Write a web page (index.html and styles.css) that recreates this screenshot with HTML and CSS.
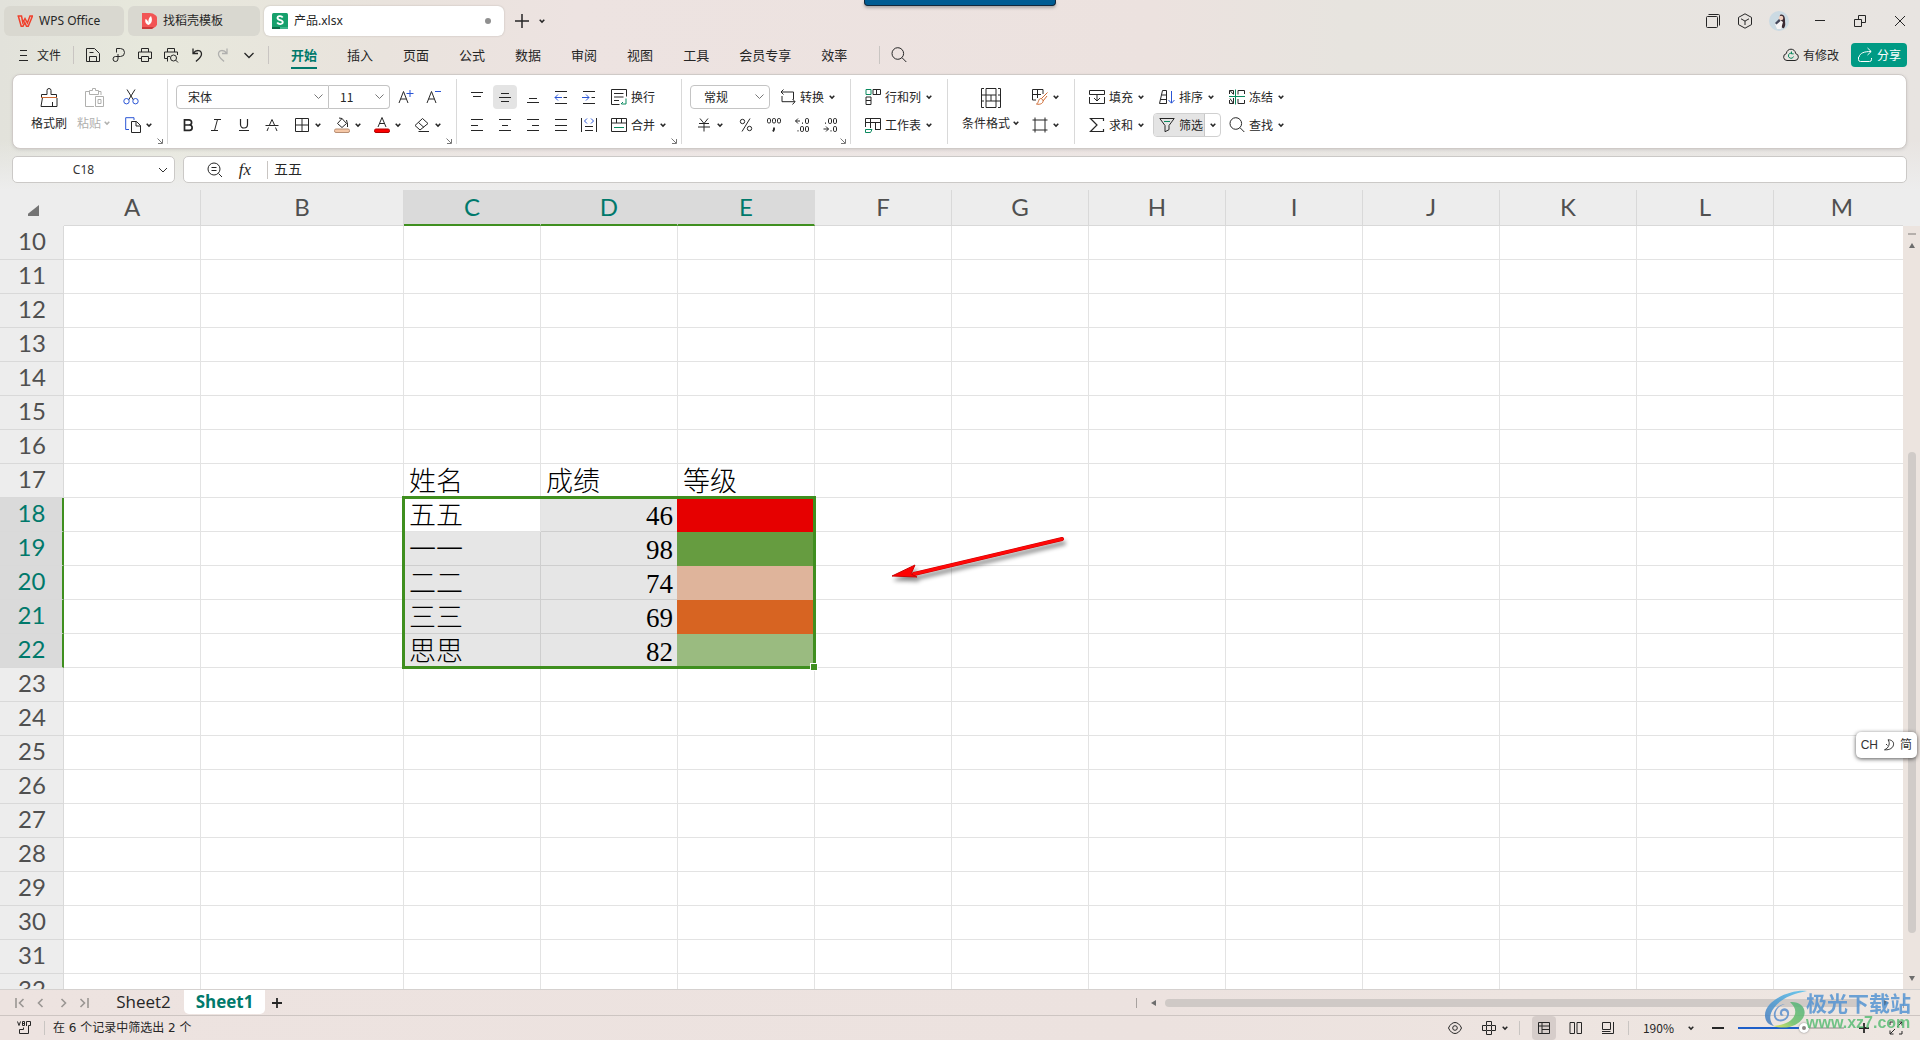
FILE: index.html
```html
<!DOCTYPE html>
<html lang="zh-CN">
<head>
<meta charset="utf-8">
<meta name="viewport" content="width=device-width, initial-scale=1">
<title>产品.xlsx - WPS Office</title>
<link rel="stylesheet" href="styles.css">
</head>
<body>
<svg class="defs" aria-hidden="true">
  <symbol id="chev" viewBox="0 0 8 8"><path d="M1.7 2.8 4 5.1l2.3-2.3" stroke-width="1.5"/></symbol>
  <symbol id="drop" viewBox="0 0 10 10"><path d="m1 3 4 4 4-4"/></symbol>
  <symbol id="corner" viewBox="0 0 6 6"><path d="M.5.5 5 5M5.5 1v4.5H1"/></symbol>
  <symbol id="search" viewBox="0 0 16 16"><circle cx="6.800" cy="6.500" r="5.800"/><path d="m11 10.700 4.300 4.300"/></symbol>
</svg>

<header class="chrome">
  <div class="titlebar">
    <button class="tab"><svg width="16" height="12" viewBox="0 0 16 12"><path d="M.5 1h4l1.300 6.500L8 3.500 10.400 8 13 1h2.500L11.200 11.300H9.500L7.800 7.500 6 11.300H4.200L1.300 1" fill="none" stroke="#f0402c" stroke-width="1.500"/></svg>WPS Office</button>
    <button class="tab tab-docer"><svg width="16" height="16" viewBox="0 0 16 16"><path d="M1 0h7.500a8 7.500 0 0 1 0 16H1z" fill="#f25555"/><path d="M1 14h12l-2 2H1z" fill="#c93a3a"/><path d="M7.500 12C4 10.500 4 8 4.500 6 6 6.500 7 8 7.500 10 7 7 8 4.500 10 3c1.500 3.500 1.500 7-2.500 9z" fill="#fff"/></svg>找稻壳模板</button>
    <button class="tab tab-active"><svg width="16" height="16" viewBox="0 0 16 16"><rect width="16" height="16" rx="1.500" fill="#16a06c"/><path d="M0 14h16v2H0z" fill="#0b6d48"/><path d="M8 14h8v2H8z" fill="#3cb58a"/><path d="M10.700 4.500C9.500 2.600 5.500 2.800 5.500 5.100c0 2.700 5.300 1.300 5.300 4 0 2.400-4.300 2.600-5.600.4" fill="none" stroke="#fff" stroke-width="1.800"/></svg><span class="tab-name">产品.xlsx</span><i class="dot"></i></button>
    <button class="new-tab" aria-label="新建"><svg width="14" height="14" viewBox="0 0 14 14"><path d="M7 0v14M0 7h14" stroke-width="1.500"/></svg></button>
    <button class="new-tab" aria-label="标签列表"><svg width="8" height="8"><use href="#chev"/></svg></button>
    <div class="window-tools">
      <button class="tool" aria-label="窗口"><svg width="16" height="16" viewBox="0 0 16 16"><rect x="1.500" y="3.500" width="11" height="11" rx="1"/><path d="M3.500 1.500h10q1 0 1 1v10"/></svg></button>
      <button class="tool" aria-label="应用"><svg width="16" height="16" viewBox="0 0 16 16"><path d="m8 .8 6.500 3.600v7.200L8 15.200l-6.500-3.600V4.400zM4 5.800l4 2.300 4-2.300M8 8v4"/></svg></button>
      <button class="tool avatar" aria-label="账号"><svg width="20" height="20" viewBox="0 0 20 20"><circle cx="10" cy="10" r="10" fill="#cbdae3"/><path d="M11 4c3-1.500 5 1 5 5s1 5-1 8c-2 1-3-2-3-5l-2-2z" fill="#3a2a33"/><circle cx="12" cy="7" r="2.300" fill="#f0cfc0"/><path d="m6 13 5-4 3 2-2 7H8z" fill="#f5f3f4"/><path d="m6 12 4-4 1.500 2-4 3.500z" fill="#44465a"/></svg></button>
      <button class="win" aria-label="最小化"><svg width="12" height="12" viewBox="0 0 12 12"><path d="M1 5.500h10"/></svg></button>
      <button class="win" aria-label="还原"><svg width="12" height="12" viewBox="0 0 12 12"><path d="M.5 4.500h7v7h-7zM4.500 4.500v-4h7v7h-4"/></svg></button>
      <button class="win" aria-label="关闭"><svg width="12" height="12" viewBox="0 0 12 12"><path d="m1 1 10 10M11 1 1 11"/></svg></button>
    </div>
    <div class="top-banner"></div>
  </div>

  <nav class="menubar">
    <button class="file"><svg width="10" height="12" viewBox="0 0 10 12"><path d="M1 1.500h7M1 6.500h7M0 11.500h9"/></svg>文件</button>
    <i class="bar"></i>
    <div class="quick">
      <button aria-label="保存"><svg width="16" height="16" viewBox="0 0 16 16"><path d="M1.500 1.500h8l5 5v8h-13zM4.500 14.500v-5h7v5M4.500 5.500h4"/></svg></button>
      <button aria-label="输出"><svg width="16" height="16" viewBox="0 0 16 16"><path d="M5.500 5.500v-4h4a4 4 0 0 1 0 8h-5a2.500 2.500 0 1 0 2.500 2.500V7"/></svg></button>
      <button aria-label="打印"><svg width="16" height="16" viewBox="0 0 16 16"><path d="M4.500 5V1.500h7V5M4 11.500H1.500V5h13v6.500H12M4.500 9.500h7v5h-7z"/></svg></button>
      <button aria-label="打印预览"><svg width="16" height="16" viewBox="0 0 16 16"><path d="M4.500 5V1.500h7V5M4 11.500H1.500V5h13v3M4.500 14.500V9.500H7"/><circle cx="10.500" cy="11" r="3"/><path d="m12.800 13.200 2.200 2.300"/></svg></button>
      <button aria-label="撤销"><svg width="16" height="16" viewBox="0 0 16 16"><path d="M4 1.500v5h5M4.300 6.200C7 2.500 12.500 2.500 12.500 7c0 3-3 5-5.500 7.500" stroke-width="1.300"/></svg></button>
      <button class="off" aria-label="恢复"><svg width="16" height="16" viewBox="0 0 16 16"><path d="M12 1.500v5H7M11.700 6.200C9 2.500 3.500 2.500 3.500 7c0 3 3 5 5.500 7.500" stroke-width="1.300"/></svg></button>
      <button aria-label="更多"><svg width="16" height="16" viewBox="0 0 16 16"><path d="m3.500 6 4.500 4.500L12.500 6" stroke-width="1.300"/></svg></button>
    </div>
    <i class="bar"></i>
    <div class="menus">
      <a href="#" class="current">开始</a><a href="#">插入</a><a href="#">页面</a><a href="#">公式</a><a href="#">数据</a><a href="#">审阅</a><a href="#">视图</a><a href="#">工具</a><a href="#">会员专享</a><a href="#">效率</a>
    </div>
    <i class="bar"></i>
    <button class="find" aria-label="搜索"><svg width="16" height="16"><use href="#search"/></svg></button>
    <div class="cloud">
      <button class="state"><svg width="16" height="16" viewBox="0 0 16 16"><path d="M4 13.500a3.500 3.500 0 0 1-.7-6.900C4 .7 12 .7 12.700 6.600a3.500 3.500 0 0 1-.7 6.900z"/><path d="M10.500 9.500A2.600 2.600 0 1 1 9 6.300M8.500 4.500v2.300h2.200" class="g"/></svg>有修改</button>
      <button class="share"><svg width="16" height="16" viewBox="0 0 16 16"><path d="M1.500 10v2.500q0 2 2 2h9q2 0 2-2V11M2 10c1-4 5-5.500 12-5.500M10.500 1l3.700 3.500L10.500 8"/></svg>分享</button>
    </div>
  </nav>

  <section class="ribbon">
    <div class="group first">
      <button class="big"><svg width="20" height="20" viewBox="0 0 20 20"><path d="M2.500 9V6.500h5.500v-4a2 2 0 0 1 4 0v4h5.500V9M3.500 9.500 2 18.500h16V10M13.500 18.500V14"/><path d="M2 9.500h16" class="o"/></svg><span>格式刷</span></button>
      <button class="big off"><svg width="20" height="20" viewBox="0 0 20 20"><path d="M5 3.500H1.500v15H10M14 3.500h3V7M5.500 2.500h3V.5h3v2h3v4h-9zM11.500 8.500h8v10h-8zM14 11.500h3v4h-3z"/></svg><span>粘贴<svg width="8" height="8"><use href="#chev"/></svg></span></button>
      <div class="rows">
        <div class="row"><button class="ib" aria-label="剪切"><svg width="16" height="16" viewBox="0 0 16 16"><path d="M4 .5 10.500 11M12 .5 5.500 11"/><circle cx="3.500" cy="12.200" r="2.700" class="b"/><circle cx="12.500" cy="12.200" r="2.700" class="b"/></svg></button></div>
        <div class="row"><button class="dd" aria-label="复制"><i><svg width="16" height="16" viewBox="0 0 16 16"><path d="M4 12.500H.7V.7H9V3" class="b"/><path d="M6.500 4.500h5l4 4v7h-9zM11 4.500v4.500h4.500"/></svg></i><svg width="8" height="8"><use href="#chev"/></svg></button></div>
      </div>
      <svg class="launcher" width="6" height="6"><use href="#corner"/></svg>
    </div>

    <div class="group snug">
      <div class="rows">
        <div class="row">
          <div class="pair"><select class="font" aria-label="字体"><option>宋体</option></select><select class="size" aria-label="字号"><option>11</option></select></div>
          <button class="ib" aria-label="增大字号"><svg width="16" height="16" viewBox="0 0 16 16"><path d="m1 14 4.500-11.500L10 14M2.700 10h5.600"/><path d="M12 1v7M8.500 4.500h7" class="b"/></svg></button>
          <button class="ib" aria-label="减小字号"><svg width="16" height="16" viewBox="0 0 16 16"><path d="m1 14 4.500-11.500L10 14M2.700 10h5.600"/><path d="M9 2.500h6" class="b"/></svg></button>
        </div>
        <div class="row">
          <button class="ib" aria-label="加粗"><svg width="16" height="16" viewBox="0 0 16 16"><path d="M4.500 8H9a2.500 2.500 0 0 0 0-5.200H4.500v10.500h5A2.600 2.600 0 0 0 9.500 8" stroke-width="1.700"/></svg></button>
          <button class="ib" aria-label="倾斜"><svg width="16" height="16" viewBox="0 0 16 16"><path d="M6 2.500h7M3 13.500h7M9.500 2.500l-3 11"/></svg></button>
          <button class="ib" aria-label="下划线"><svg width="16" height="16" viewBox="0 0 16 16"><path d="M4.500 2v5.500a3.500 3.500 0 0 0 7 0V2M3 13.500h10" stroke-width="1.200"/></svg></button>
          <button class="ib" aria-label="删除线"><svg width="16" height="16" viewBox="0 0 16 16"><path d="M5.500 8 8 2.500 10.500 8M1.500 8.500h13M4.500 10.500 3 14M11.500 10.500 13 14"/></svg></button>
          <button class="dd" aria-label="边框"><i><svg width="16" height="16" viewBox="0 0 16 16"><path d="M1.500 1.500h13v13h-13zM8 1.500v13M1.500 8h13"/></svg></i><svg width="8" height="8"><use href="#chev"/></svg></button>
          <button class="dd" aria-label="填充颜色"><i><svg width="16" height="16" viewBox="0 0 16 16"><path d="m8 1.500-4.500 5L8 10.500l4.500-4zM5 1l3 .5M12.500 3l1 4v3"/><rect x=".5" y="12" width="15" height="3.500" rx="1.500" fill="#f5c7a6" stroke="#b88f74"/></svg></i><svg width="8" height="8"><use href="#chev"/></svg></button>
          <button class="dd" aria-label="字体颜色"><i><svg width="16" height="16" viewBox="0 0 16 16"><path d="M4 10 8 .5l4 9.500M5.500 6.500h5"/><rect x=".5" y="12" width="15" height="3.500" rx="1.500" fill="#fb0000" stroke="#b00000"/></svg></i><svg width="8" height="8"><use href="#chev"/></svg></button>
          <button class="dd" aria-label="清除"><i><svg width="16" height="16" viewBox="0 0 16 16"><path d="m6 13-5-4.500L8.500 1.500l5.500 5zM4.500 5.500l5.500 5M4.500 14.500H15"/></svg></i><svg width="8" height="8"><use href="#chev"/></svg></button>
        </div>
      </div>
      <svg class="launcher" width="6" height="6"><use href="#corner"/></svg>
    </div>

    <div class="group">
      <div class="rows">
        <div class="row">
          <button class="ib" aria-label="顶端对齐"><svg width="16" height="16" viewBox="0 0 16 16"><path d="M2 3.500h12M4 7.500h8"/></svg></button>
          <button class="ib on" aria-label="垂直居中"><svg width="16" height="16" viewBox="0 0 16 16"><path d="M4 4.500h8M2 8.500h12M4 12.500h8"/></svg></button>
          <button class="ib" aria-label="底端对齐"><svg width="16" height="16" viewBox="0 0 16 16"><path d="M4 9.500h8M2 13.500h12"/></svg></button>
          <button class="ib" aria-label="减少缩进"><svg width="16" height="16" viewBox="0 0 16 16"><path d="M2 2.500h12M10.500 8.500H14M2 14.500h12"/><path d="M9 8.500H2M5 5.500l-3 3 3 3" class="b"/></svg></button>
          <button class="ib" aria-label="增加缩进"><svg width="16" height="16" viewBox="0 0 16 16"><path d="M2 2.500h12M10.500 8.500H14M2 14.500h12"/><path d="M1 8.500h7M5 5.500l3 3-3 3" class="b"/></svg></button>
        </div>
        <div class="row">
          <button class="ib" aria-label="左对齐"><svg width="16" height="16" viewBox="0 0 16 16"><path d="M2 2.500h12M2 8.500h7M2 13.500h12"/></svg></button>
          <button class="ib" aria-label="水平居中"><svg width="16" height="16" viewBox="0 0 16 16"><path d="M2 2.500h12M5 8.500h6M2 13.500h12"/></svg></button>
          <button class="ib" aria-label="右对齐"><svg width="16" height="16" viewBox="0 0 16 16"><path d="M2 2.500h12M7 8.500h7M2 13.500h12"/></svg></button>
          <button class="ib" aria-label="两端对齐"><svg width="16" height="16" viewBox="0 0 16 16"><path d="M2 2.500h12M2 8.500h12M2 13.500h12"/></svg></button>
          <button class="ib" aria-label="分散对齐"><svg width="16" height="16" viewBox="0 0 16 16"><path d="M.5 1v14M15.500 1v14M4 9.500h8M4 13.500h8"/><path d="M6 1.500 3.500 4 6 6.500M10 1.500 12.500 4 10 6.500" class="b"/></svg></button>
        </div>
      </div>
      <div class="rows">
        <button class="tb"><svg width="16" height="16" viewBox="0 0 16 16"><path d="M8.500 15.500h-8V.5h15v7M3 4.500h9.500M3 8h9.500M3 11.500h5"/><path d="M15 9.500v5.500h-4.500M12 13l-2 2" class="g"/></svg>换行</button>
        <button class="tb"><svg width="16" height="16" viewBox="0 0 16 16"><path d="M.5 1.500h15v13H.5zM.5 6h15M5.500 1.500V6M10.500 1.500V6"/><path d="M3 10.500h10" class="g"/></svg>合并<svg width="8" height="8"><use href="#chev"/></svg></button>
      </div>
      <svg class="launcher" width="6" height="6"><use href="#corner"/></svg>
    </div>

    <div class="group tight">
      <div class="rows">
        <div class="row wide">
          <select class="format" aria-label="数字格式"><option>常规</option></select>
          <button class="tb"><svg width="16" height="16" viewBox="0 0 16 16"><path d="M3.500.5 1 3l2.500 2.500M1 3h12.500v7.500M12.500 10 15 12.700l-2.500 2.800M15 12.700H2V7"/></svg>转换<svg width="8" height="8"><use href="#chev"/></svg></button>
        </div>
        <div class="row wide">
          <button class="dd" aria-label="货币"><i><svg width="16" height="16" viewBox="0 0 16 16"><path d="m4 1.500 4 5 4-5M3 6.500h10M2 10h12M8 6.500v8"/></svg></i><svg width="8" height="8"><use href="#chev"/></svg></button>
          <div class="row">
            <button class="ib" aria-label="百分比"><svg width="16" height="16" viewBox="0 0 16 16"><path d="m12 1.500-8 13"/><circle cx="4.500" cy="4.500" r="2.200"/><circle cx="11.500" cy="11.500" r="2.200"/></svg></button>
            <button class="ib" aria-label="千位分隔"><svg width="16" height="16" viewBox="0 0 16 16"><rect x="1.500" y="1.500" width="3" height="4.500" rx="1.300"/><rect x="6.500" y="1.500" width="3" height="4.500" rx="1.300"/><rect x="11.500" y="1.500" width="3" height="4.500" rx="1.300"/><path d="M8 10.500v2l-1 2" stroke-width="1.800"/></svg></button>
            <button class="ib" aria-label="增加小数位"><svg width="16" height="16" viewBox="0 0 16 16"><path d="M4 1.500 1.500 4 4 6.500M1.500 4H6M8.500 5.500v1.300M4 13.200v1.300"/><rect x="11.500" y="1.500" width="3" height="5" rx="1.300"/><rect x="6.500" y="9.500" width="3" height="5" rx="1.300"/><rect x="11.500" y="9.500" width="3" height="5" rx="1.300"/></svg></button>
            <button class="ib" aria-label="减少小数位"><svg width="16" height="16" viewBox="0 0 16 16"><path d="M4 9.500 6.500 12 4 14.500M6.500 12H1.500M3.500 5.500v1.300M9 13.200v1.300"/><rect x="6.500" y="1.500" width="3" height="5" rx="1.300"/><rect x="11.500" y="1.500" width="3" height="5" rx="1.300"/><rect x="11.500" y="9.500" width="3" height="5" rx="1.300"/></svg></button>
          </div>
        </div>
      </div>
      <svg class="launcher" width="6" height="6"><use href="#corner"/></svg>
    </div>

    <div class="group roomy">
      <div class="rows">
        <button class="tb"><svg width="16" height="16" viewBox="0 0 16 16"><path d="M1 .5h5v5H1z" class="g"/><path d="M8 5.500v-5h7.500v5H8M11.500.5v5M1 8h5v7.500H1zM1 11.500h5"/></svg>行和列<svg width="8" height="8"><use href="#chev"/></svg></button>
        <button class="tb"><svg width="16" height="16" viewBox="0 0 16 16"><path d="M10 12.500h5.500v-11H.5V10M.5 5.500h15M5.500 1.500V11M10.500 5.500v7"/><path d="M.5 12.500H7l-1.500 3H.5z" class="g"/></svg>工作表<svg width="8" height="8"><use href="#chev"/></svg></button>
      </div>
    </div>

    <div class="group roomy near">
      <button class="big"><svg width="20" height="20" viewBox="0 0 20 20"><path d="M3 .5H.5v19H3M17 .5h2.500v19H17M5 .5h10v19H5zM.5 7H15M5 13h14.500M10 7v6M.5 13H3M17 7h2.500"/></svg><span>条件格式<svg width="8" height="8"><use href="#chev"/></svg></span></button>
      <div class="rows">
        <button class="dd" aria-label="表格样式"><i><svg width="16" height="16" viewBox="0 0 16 16"><path d="M4 11H.5V.5h10.500V5M.5 5.500H9M5.500.5V9"/><path d="m15.500 3.500-6 6M15 7l-4 5M9.500 9.500C6 9 7 14 4.500 15c4 1 7-1 6.500-3.500z" class="o"/></svg></i><svg width="8" height="8"><use href="#chev"/></svg></button>
        <button class="dd" aria-label="单元格"><i><svg width="16" height="16" viewBox="0 0 16 16"><path d="M3 .5v15M13 .5v15M.5 3h15M.5 13h15"/></svg></i><svg width="8" height="8"><use href="#chev"/></svg></button>
      </div>
    </div>

    <div class="group roomy last">
      <div class="rows">
        <button class="tb"><svg width="16" height="16" viewBox="0 0 16 16"><path d="M3 5.500H.5v-4h15v4H13M.5 8v6.500h15V8M3 5.500h10M8 5.500v6M5 9l3 3 3-3"/></svg>填充<svg width="8" height="8"><use href="#chev"/></svg></button>
        <button class="tb"><svg width="16" height="16" viewBox="0 0 16 16"><path d="M14.500 4V1.500H1.500l6.500 6.500-6.500 6.500h13V12" stroke-width="1.200"/></svg>求和<svg width="8" height="8"><use href="#chev"/></svg></button>
      </div>
      <div class="rows">
        <button class="tb pad"><svg width="16" height="16" viewBox="0 0 16 16"><path d="m.5 14.500 3-13h4v13M2 10.500h5.500M3 6h4.500M.5 14.500h7"/><path d="M12.500 2v12M9.500 11l3 3.200 3-3.200" class="b"/></svg>排序<svg width="8" height="8"><use href="#chev"/></svg></button>
        <div class="split"><button><svg width="16" height="16" viewBox="0 0 16 16"><path d="M.8 1.500h14.400L10 8.500v4.200l-4 2V8.500z"/><path d="M5 4.500h6" class="g"/></svg>筛选</button><button aria-label="筛选选项"><svg width="8" height="8"><use href="#chev"/></svg></button></div>
      </div>
      <div class="rows">
        <button class="tb"><svg width="16" height="16" viewBox="0 0 16 16"><path d="M4.500 5V1.500H.5V5M1 1.500l3.500 4M9 5.500V1.500h6.500V5M.5 11v3.500h4V9M1 9.500l3.500 5M9 10v4.500h6.500V11"/><path d="M0 7.500h16M6.500.5v15" class="g"/></svg>冻结<svg width="8" height="8"><use href="#chev"/></svg></button>
        <button class="tb"><svg width="16" height="16"><use href="#search"/></svg>查找<svg width="8" height="8"><use href="#chev"/></svg></button>
      </div>
    </div>
  </section>

  <section class="formula">
    <div class="namebox"><input type="text" value="C18" aria-label="名称框"><svg width="10" height="10"><use href="#drop"/></svg></div>
    <div class="fx">
      <button aria-label="缩放"><svg width="16" height="16" viewBox="0 0 16 16"><circle cx="7" cy="7" r="6"/><path d="m11.500 11.500 3.500 3.500M4.500 5.500h5M4.500 8.500h5"/></svg></button>
      <button class="fn" aria-label="插入函数">fx</button>
      <i class="bar"></i>
      <input type="text" value="五五" aria-label="编辑栏">
    </div>
  </section>
</header>

<main class="sheet">
  <div class="cells"><table id="grid"></table>
    <svg class="arrow" width="190" height="56" viewBox="0 0 190 56"><path d="M176 6 28 41" stroke="#c00" stroke-width="4" stroke-linecap="round"/><path d="M176 6 28 41" stroke="#ff0808" stroke-width="3" stroke-linecap="round"/><path d="m6 43 23-11-4 9 6 3z" fill="#f00" stroke="#c00" stroke-width="1"/></svg>
  </div>
  <div class="vscroll">
    <i class="dash"></i><i class="up"></i><span class="vtrack"><i class="vthumb"></i></span><i class="down"></i>
  </div>
  <div class="ime">CH <svg width="12" height="12" viewBox="0 0 12 12"><path d="M5 .8c4 0 6 2.200 5.500 5-.5 3-3.500 5.400-9 5C6 9 7.500 4 5 .8zM3 5l1.500 1.500" /></svg> 简</div>
</main>

<footer>
  <div class="sheetbar">
    <div class="nav">
      <button aria-label="首个"><svg width="10" height="10" viewBox="0 0 10 10"><path d="M1 0v10M8.500 1 4.500 5l4 4" stroke-width="1.600"/></svg></button>
      <button aria-label="上一个"><svg width="10" height="10" viewBox="0 0 10 10"><path d="M7.500 1l-4 4 4 4" stroke-width="1.600"/></svg></button>
      <button aria-label="下一个"><svg width="10" height="10" viewBox="0 0 10 10"><path d="m2.500 1 4 4-4 4" stroke-width="1.600"/></svg></button>
      <button aria-label="末个"><svg width="10" height="10" viewBox="0 0 10 10"><path d="M9 0v10M1.500 1l4 4-4 4" stroke-width="1.600"/></svg></button>
    </div>
    <button class="stab">Sheet2</button>
    <button class="stab stab-on">Sheet1</button>
    <button class="add" aria-label="新建工作表"><svg width="10" height="10" viewBox="0 0 10 10"><path d="M5 0v10M0 5h10" stroke-width="1.800"/></svg></button>
    <div class="hscroll"><i class="stick"></i><i class="left"></i><span class="htrack"><i class="hthumb"></i></span><i class="right"></i><i class="stick"></i></div>
  </div>
  <div class="status">
    <svg width="14" height="14" viewBox="0 0 14 14"><path d="m.5.5 1.500 4 1.500-4M5.500.5v4h2v-4zM5.500 2.500h2M9.500 5V.5h4v4h-2v8h-9v-4h4v-2"/></svg>
    <i class="bar"></i>
    <span class="count">在 6 个记录中筛选出 2 个</span>
    <div class="view">
      <button class="vb" aria-label="护眼"><svg width="14" height="14" viewBox="0 0 14 14"><path d="M.5 7C2 3.500 4.500 1.500 7 1.500S12 3.500 13.500 7C12 10.500 9.500 12.500 7 12.500S2 10.500.5 7z"/><circle cx="7" cy="7" r="2.300"/></svg></button>
      <button class="dd" aria-label="阅读"><i><svg width="14" height="14" viewBox="0 0 14 14"><path d="M4.500 4V.5h5V4M4.500 10v3.500h5V10M4 4.500H.5v5H4M10 4.500h3.500v5H10M4.500 4.500h5v5h-5z"/></svg></i><svg width="8" height="8"><use href="#chev"/></svg></button>
      <i class="bar"></i>
      <button class="vb on" aria-label="普通视图"><svg width="14" height="14" viewBox="0 0 14 14"><path d="M1.500 1.500h11v11h-11zM1.500 5h11M5 1.500v11M5 8.500h7.500"/></svg></button>
      <button class="vb" aria-label="分页预览"><svg width="14" height="14" viewBox="0 0 14 14"><path d="M1 1.500h4.500v11H1zM8 1.500h4.500v11H8z"/></svg></button>
      <button class="vb" aria-label="页面布局"><svg width="14" height="14" viewBox="0 0 14 14"><path d="M1.500 1.500h8v7h-8zM12.500 1v11.500H1M1 10.500h8.500"/></svg></button>
      <i class="bar"></i>
      <button class="pct">190%<svg width="8" height="8"><use href="#chev"/></svg></button>
      <button class="vb" aria-label="缩小"><svg width="12" height="12" viewBox="0 0 12 12"><path d="M0 6h12" stroke-width="2"/></svg></button>
      <input type="range" min="0" max="100" value="64" aria-label="缩放比例">
      <button class="vb" aria-label="放大"><svg width="12" height="12" viewBox="0 0 12 12"><path d="M1 6h10M6 1v10" stroke-width="1.800"/></svg></button>
      <button class="vb" aria-label="全屏"><svg width="14" height="14" viewBox="0 0 14 14"><path d="M1 4V1h3M13 10v3h-3M8 6l5-5M9.500 1H13v3.500M6 8l-5 5M1 9.500V13h3.500"/></svg></button>
    </div>
  </div>
  <div class="mark">
    <svg width="44" height="40" viewBox="0 0 44 40">
      <defs><linearGradient id="w1" x1="1" y1="0" x2="0" y2="1"><stop offset="0" stop-color="#55c4ef"/><stop offset="1" stop-color="#4378bd"/></linearGradient><linearGradient id="w2" x1="1" y1="0" x2="0" y2="1"><stop offset="0" stop-color="#4fb07e"/><stop offset=".6" stop-color="#6cc268"/><stop offset="1" stop-color="#e6e84e"/></linearGradient></defs>
      <path d="M43 1C26-1 0 11 1 26c.5 6 4 9 9 10-5-5-5-12 0-18C16 9 28 4 43 1z" fill="url(#w1)"/>
      <path d="M26 12c11-1 18 7 13 16C34 36 22 40 9 36c12-1 20-5 22-12 1-5-1-8-5-12z" fill="url(#w2)"/>
      <path d="M21 14c-9 2-12 12-7 15 5 2 10-2 9-6-1-3-5-3-5 0 0 1 1 2 2 2-2 2-5 0-4-3 1-5 8-5 9 0 1 6-5 11-11 9C6 28 10 15 21 14z" fill="#5a8fce"/>
    </svg>
    <div class="mark-text"><b>极光下载站</b><span>www.xz7.com</span></div>
  </div>
</footer>
<script src="grid.js"></script>
</body>
</html>
```
FILE: styles.css
```css
* { box-sizing: border-box; }
html, body { height: 100%; margin: 0; }
body {
  display: flex; flex-direction: column; overflow: hidden;
  font: 12px/16px "Noto Sans CJK SC", sans-serif; color: #262626;
  background: #ece2df;
}
button, input, select { font: inherit; color: inherit; border: 0; padding: 0; margin: 0; background: none; outline: 0; }
button { display: inline-flex; align-items: center; justify-content: center; white-space: nowrap; }
svg { flex: none; fill: none; stroke: currentColor; }
i { display: block; flex: none; font-style: normal; }
.defs { position: absolute; width: 0; height: 0; }
.b { stroke: #2a55d5; }
.g { stroke: #0b8a5f; }
.o { stroke: #cf6a32; }
.off { color: #b0b0ae; }
.bar { width: 1px; height: 18px; background: #c9c5c2; }

.chrome {
  background:
    linear-gradient(to bottom, transparent 140px, #ededed 190px),
    linear-gradient(to right, #e2e2db, #e7e8dc 8%, #e9e3dd 20%, #ede3e1 30%, #ece2df 60%, #e7e4df 70%, #e8e4e1);
}

/* Title bar */
.titlebar { display: flex; align-items: center; gap: 4px; height: 40px; padding: 2px 0 0 4px; }
.tab { height: 30px; width: 120px; border-radius: 6px; background: #d9d8d0; gap: 6px; justify-content: flex-start; padding: 0 13px; font-family: "Noto Sans", "Noto Sans CJK SC", sans-serif; }
.tab svg { stroke: none; }
.tab-docer { width: 132px; }
.tab-active { width: 240px; padding: 0 13px 0 8px; background: #fff; box-shadow: 0 0 2px #bbb4ae; }
.tab-name { flex: 1; text-align: left; }
.dot { width: 6px; height: 6px; border-radius: 50%; background: #8f8f8f; }
.new-tab { width: 16px; height: 30px; margin-left: 6px; }
.new-tab + .new-tab { margin-left: 0; }
.window-tools { display: flex; align-items: center; margin-left: auto; }
.tool { width: 32px; height: 30px; }
.avatar { width: 36px; margin-right: 3px; }
.avatar svg { stroke: none; }
.win { width: 40px; height: 30px; }
.top-banner { position: absolute; top: 0; left: 45%; width: 192px; height: 6px; border: 1px solid #12283c; border-top: 0; border-radius: 0 0 4px 4px; background: #005c93; box-shadow: 0 2px 3px #7778; }

/* Menu row */
.menubar { display: flex; align-items: center; height: 34px; padding: 0 13px 4px 19px; }
.file { gap: 8px; margin-right: 12px; }
.quick { display: flex; margin: 0 6px; }
.quick button { width: 26px; height: 24px; }
.menus { display: flex; gap: 30px; margin: 0 32px 0 22px; }
.menus a { color: inherit; text-decoration: none; font-size: 13px; line-height: 24px; border-bottom: 2px solid transparent; margin-top: 2px; }
.menus .current { color: #00796b; font-weight: 700; border-color: #00796b; }
.find { margin-left: 11px; }
.cloud { display: flex; gap: 12px; margin-left: auto; }
.state, .share { gap: 4px; }
.share { width: 56px; height: 24px; border-radius: 4px; color: #fff; background: #009a84; }

/* Ribbon */
.ribbon { display: flex; margin: 0 13px 0 12px; height: 75px; padding: 4px 0; border: 1px solid #cfcac7; border-radius: 8px; background: #fff; box-shadow: 0 1px 3px #aaa6; }
.group { position: relative; display: flex; gap: 8px; padding: 6px 12px 0 8px; border-right: 1px solid #d9d9d9; }
.first { gap: 6px; padding-left: 16px; }
.tight { padding-right: 8px; }
.snug { padding-right: 10px; }
.roomy { padding-left: 12px; }
.near { gap: 4px; }
.last { gap: 6px; border: 0; }
.rows { display: flex; flex-direction: column; align-items: flex-start; gap: 4px; }
.row { display: flex; gap: 4px; }
.wide { gap: 8px; }
.ribbon button { height: 24px; }
.ib { width: 24px; border-radius: 4px; }
.on { background: #e4e4e4; }
.dd { padding: 0 2px; }
.dd i { display: flex; justify-content: center; width: 24px; }
.tb { gap: 4px; padding: 0 2px; }
.pad { padding: 0 6px; }
.ribbon .big { flex-direction: column; justify-content: flex-start; height: 52px; padding: 3px 2px 0; }
.big span { display: flex; align-items: center; gap: 2px; height: 34px; }
.launcher { position: absolute; right: 4px; bottom: 0; color: #777; }
select {
  appearance: none; height: 24px; border: 1px solid #c4c4c4; border-radius: 4px; padding: 0 20px 0 11px;
  background: #fff url("data:image/svg+xml,%3Csvg xmlns='http://www.w3.org/2000/svg' width='9' height='6' fill='none' stroke='%23777'%3E%3Cpath d='M.5.5l4 4 4-4'/%3E%3C/svg%3E") no-repeat right 5px center;
}
.pair { display: flex; }
.font { width: 153px; border-radius: 4px 0 0 4px; }
.size { width: 61px; border-radius: 0 4px 4px 0; border-left: 0; }
.format { width: 80px; padding-left: 13px; }
.split { display: flex; height: 24px; border: 1px solid #d0d0d0; border-radius: 4px; overflow: hidden; }
.split button { height: 22px; }
.split button:first-child { gap: 4px; padding: 0 1px 0 5px; background: #e4e4e4; border-right: 1px solid #c8c8c8; }
.split button:last-child { width: 15px; }

/* Formula bar */
.formula { display: flex; gap: 8px; margin: 7px 13px 0 12px; padding-bottom: 7px; }
.namebox, .fx { display: flex; align-items: center; height: 27px; border: 1px solid #cbc9c7; border-radius: 5px; background: #fff; }
.namebox { width: 163px; padding-right: 6px; color: #333; }
.namebox input { flex: 1; min-width: 0; text-align: center; padding-right: 4px; font-family: "Noto Sans", sans-serif; }
.fx { flex: 1; padding-left: 23px; gap: 12px; }
.fx input { flex: 1; height: 20px; margin: 0 0 4px -6px; font-size: 14px; line-height: 20px; }
.fn { width: 20px; font: italic 17px/20px "Liberation Serif", serif; }

/* Cells */
.sheet { flex: 1; min-height: 0; position: relative; display: flex; background: #ededed; border-bottom: 1px solid #d5d1cf; }
.cells { position: relative; flex: 1; overflow: hidden; }
table { table-layout: fixed; width: 0; border-collapse: separate; border-spacing: 0; }
col { width: 137px; }
.c-head { width: 64px; }
.c-wide { width: 203px; }
th { background: #ededed; color: #505050; font: 400 24px/30px Lato, sans-serif; padding: 0; border: 0 solid #d9d9d9; border-width: 0 1px 1px 0; }
thead th { height: 36px; padding-bottom: 2px; }
thead th:first-child { border-color: #ededed; }
tbody th { height: 34px; padding: 0 0 3px 1px; }
th.sel { background: #dadada; color: #00796b; }
thead th.sel { border-bottom: 2px solid #3f8f1f; border-right-color: #dadada; padding-bottom: 1px; }
tbody th.sel { border-right: 2px solid #3f8f1f; }
td { position: relative; height: 34px; padding: 3px 4px 0 5px; background: #fff; border: 0 solid #e3e3e3; border-width: 0 1px 1px 0; color: #000; font: 300 27px/30px "Liberation Serif", "Noto Sans CJK SC", serif; white-space: nowrap; }
td.picked { background: #e6e6e6; border-color: #cecece; }
td.num { text-align: right; }
td.fill-red { background: #e60000; border-color: #e60000; box-shadow: -1px 0 #e60000; }
td.fill-green { background: #669c40; border-color: #669c40; box-shadow: -1px 0 #669c40; }
td.fill-peach { background: #dfb49b; border-color: #dfb49b; box-shadow: -1px 0 #dfb49b; }
td.fill-orange { background: #d76422; border-color: #d76422; box-shadow: -1px 0 #d76422; }
td.fill-sage { background: #9abb80; border-color: #9abb80; box-shadow: -1px 0 #9abb80; }
.triangle { display: block; width: 11px; height: 11px; margin: 8px 0 0 28px; background: #747474; clip-path: polygon(100% 0, 100% 100%, 0 100%, 0 80%); }
.marquee { position: absolute; z-index: 2; left: -2px; top: -2px; width: 414px; height: 173px; border: 3px solid #3f8f1f; }
.handle { position: absolute; right: -5px; bottom: -5px; width: 8px; height: 8px; background: #3f8f1f; border: 1px solid #fff; }
.arrow { position: absolute; left: 886px; top: 343px; stroke: none; filter: drop-shadow(2px 4px 2px #0007); z-index: 3; }

/* Scroll bars */
.vscroll { width: 17px; margin-top: 36px; padding: 7px 0 8px; background: #ece4df; display: flex; flex-direction: column; align-items: center; }
.dash { width: 8px; height: 2px; background: #b5afab; }
.up, .down, .left, .right { border: 3px solid transparent; }
.up { border-bottom: 5px solid #6d6d6d; border-top: 0; margin-top: 8px; }
.down { border-top: 5px solid #6d6d6d; border-bottom: 0; }
.left { border-right: 5px solid #6d6d6d; border-left: 0; }
.right { border-left: 5px solid #4f6d8a; border-right: 0; }
.vtrack { flex: 1; display: flex; flex-direction: column; padding-top: 204px; padding-bottom: 43px; }
.vthumb { flex: 1; width: 8px; border-radius: 4px; background: #d0cbc8; }
.ime { position: absolute; right: 3px; bottom: 231px; display: flex; align-items: center; gap: 5px; height: 26px; padding: 0 5px; border-radius: 5px; background: #fff; box-shadow: 0 1px 4px #000a; color: #333; z-index: 4; font-family: "Liberation Sans", "Noto Sans CJK SC", sans-serif; }

/* Sheet tabs and status bar */
footer { position: relative; background: linear-gradient(to right, #ede3e0, #ece2df 60%, #eee6e1); }
.sheetbar { display: flex; align-items: flex-start; height: 26px; border-bottom: 1px solid #cdc5c2; }
.nav { display: flex; gap: 10px; padding: 7px 0 0 15px; color: #9a9693; }
.nav button { width: 10px; height: 12px; }
.nav button:nth-child(3) { margin-left: 4px; }
.stab { height: 24px; width: 81px; font: 17px/24px "Open Sans", sans-serif; margin-left: 14px; }
.stab-on { margin-left: 0; background: #fff; border-radius: 0 0 5px 5px; color: #00796b; font-weight: 700; }
.add { width: 24px; height: 26px; }
.hscroll { display: flex; align-items: center; width: 768px; height: 26px; margin: 0 16px 0 auto; }
.stick { width: 1px; height: 10px; background: #a8a29f; }
.left { margin: 0 9px 0 14px; }
.htrack { flex: 1; height: 8px; }
.hthumb { width: 98%; height: 8px; border-radius: 4px; background: #cfc9c6; }
.right { margin: 0 14px 0 9px; }
.status { display: flex; align-items: center; gap: 10px; height: 24px; padding: 0 12px 0 17px; }
.status .bar { height: 14px; margin: 0 -2px 0 3px; }
.count { font-family: "DejaVu Sans", "Noto Sans CJK SC", sans-serif; }
.status .view { display: flex; align-items: center; gap: 8px; margin-left: auto; }
.view .bar { margin: 0; }
.vb { width: 24px; height: 24px; border-radius: 4px; }
.vb.on { background: #d6cdca; }
.view .vb.on { margin-left: 4px; }
.pct { gap: 13px; margin: 0 3px 0 6px; }
input[type="range"] { appearance: none; width: 106px; height: 10px; background: linear-gradient(to right, #1e5fc8 64%, #bdb6b3 64%) center / 100% 2px no-repeat; }
input[type="range"]::-webkit-slider-thumb { appearance: none; width: 10px; height: 10px; border-radius: 50%; background: #8a8582; border: 3px solid #fff; box-shadow: 0 0 2px #777; }
.mark { position: absolute; right: 9px; bottom: 8px; display: flex; opacity: .85; pointer-events: none; }
.mark svg { stroke: none; }
.mark-text { display: flex; flex-direction: column; margin-left: -2px; }
.mark b { font-size: 21px; line-height: 24px; color: #5594d2; }
.mark span { font: 700 16px/18px "Liberation Sans", sans-serif; color: #5cbd77; }
```
FILE: grid.js
```js
const HEAD = { width: 64, height: 36 };
const COLUMN_WIDTH = 137;
const WIDE_COLUMN_WIDTH = 203;
const ROW_HEIGHT = 34;
const FIRST_ROW = 10;

const data = {
  17: ["姓名", "成绩", "等级"],
  18: ["五五", 46, "fill-red"],
  19: ["一一", 98, "fill-green"],
  20: ["二二", 74, "fill-peach"],
  21: ["三三", 69, "fill-orange"],
  22: ["思思", 82, "fill-sage"],
};

const cell = (row, index) => {
  const values = data[row];
  const value = values && values[index - 2];
  if (value === undefined) return "<td></td>";
  if (row === 17) return `<td>${value}</td>`;
  if (index === 4) return `<td class="${value}"></td>`;
  if (index === 3) return `<td class="num picked">${value}</td>`;
  if (row === 18) return `<td>${value}<div class="marquee"><i class="handle"></i></div></td>`;
  return `<td class="picked">${value}</td>`;
};

// Draws only as many rows and columns as the window can show.
function draw() {
  const grid = document.getElementById("grid");
  const area = grid.parentElement;
  const room = area.clientWidth - HEAD.width - WIDE_COLUMN_WIDTH;
  const count = Math.min(26, Math.max(5, Math.ceil(room / COLUMN_WIDTH) + 1));
  const rows = Math.max(13, Math.ceil((area.clientHeight - HEAD.height) / ROW_HEIGHT));
  const columns = "ABCDEFGHIJKLMNOPQRSTUVWXYZ".slice(0, count).split("");

  let html = '<colgroup><col class="c-head">';
  html += columns.map((c) => `<col${c === "B" ? ' class="c-wide"' : ""}>`).join("");
  html += '</colgroup><thead><tr><th><i class="triangle"></i></th>';
  html += columns.map((c) => `<th${"CDE".includes(c) ? ' class="sel"' : ""}>${c}</th>`).join("");
  html += "</tr></thead><tbody>";
  for (let row = FIRST_ROW; row < FIRST_ROW + rows; row++) {
    const picked = row >= 18 && row <= 22 ? ' class="sel"' : "";
    html += `<tr><th${picked}>${row}</th>${columns.map((c, i) => cell(row, i)).join("")}</tr>`;
  }
  grid.innerHTML = html + "</tbody>";
}

draw();
window.addEventListener("resize", draw);
```
